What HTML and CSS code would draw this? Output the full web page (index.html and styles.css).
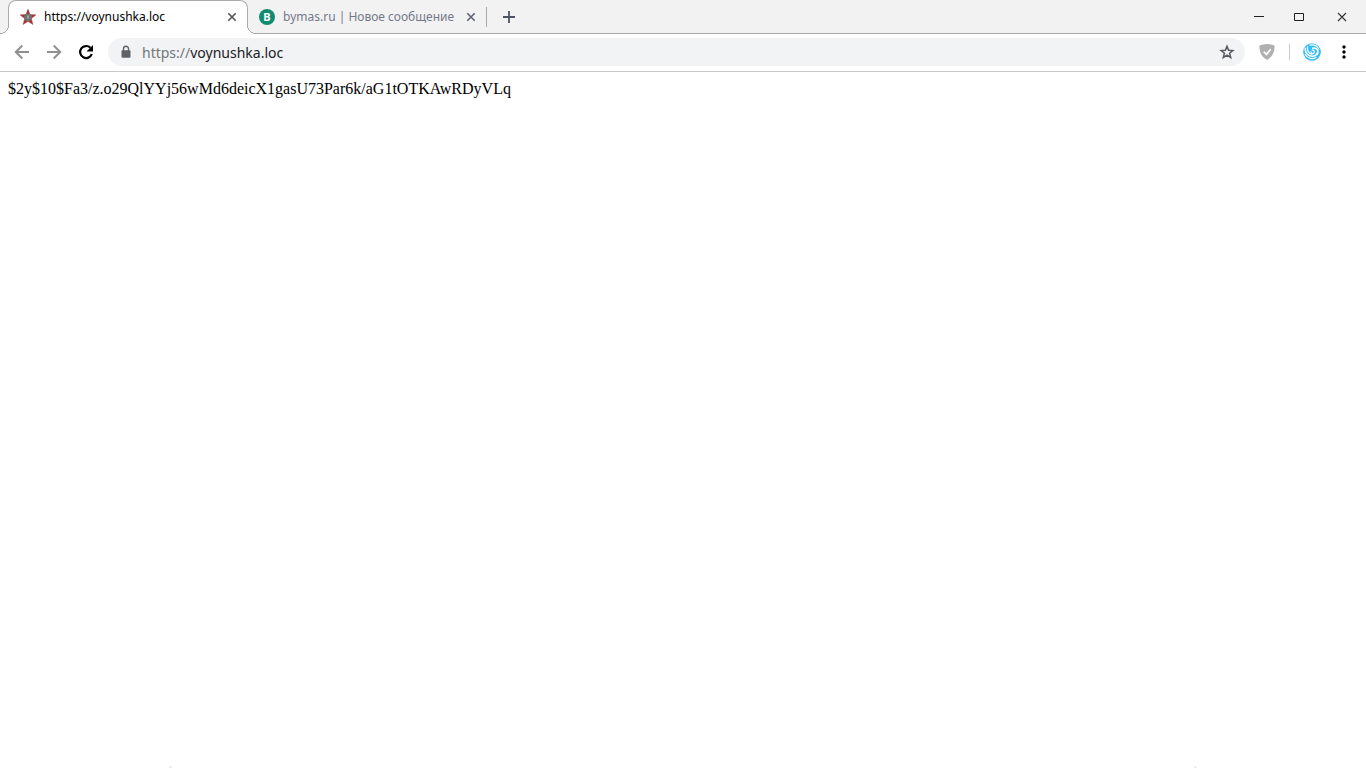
FILE: index.html
```html
<!DOCTYPE html>
<html lang="ru">
<head>
<meta charset="utf-8">
<title>https://voynushka.loc</title>
<link rel="stylesheet" href="styles.css">
</head>
<body>
<header class="browser">
  <div class="tabstrip">
    <div class="tab tab-active">
      <svg class="favicon" viewBox="0 0 16 16" aria-hidden="true">
        <path d="M8 .3 10 5.6 15.8 5.9 11.3 9.6 12.9 15.4 8 12.3 3.1 15.4 4.7 9.6.2 5.9 6 5.6z" fill="#c9201f" stroke="#9a5552" stroke-width=".6"/>
        <path d="M8 1.2V8L5 14M8 8l3 6M8 8 1 6M8 8l7-2" stroke="#93403f" stroke-width=".7" fill="none"/>
        <circle cx="8" cy="8.3" r="3.9" fill="#6f7273"/>
        <path d="M7 6.8 8 6.200l1 .6-.2 3H7.200z" fill="#a5a5a5"/>
      </svg>
      <a class="tab-title" href="#">https://voynushka.loc</a>
      <button class="tab-close" aria-label="Закрыть вкладку"><svg viewBox="0 0 16 16"><path d="m4.300 4.300 7.400 7.400m0-7.400-7.400 7.400" stroke="#555" stroke-width="1.600"/></svg></button>
    </div>
    <div class="tab">
      <span class="favicon letter-icon">B</span>
      <a class="tab-title" href="#">bymas.ru | Новое сообщение</a>
      <button class="tab-close" aria-label="Закрыть вкладку"><svg viewBox="0 0 16 16"><path d="m4.300 4.300 7.400 7.400m0-7.400-7.400 7.400" stroke="#5f6374" stroke-width="1.600"/></svg></button>
    </div>
    <button class="new-tab" aria-label="Новая вкладка"><svg viewBox="0 0 16 16"><path d="M8 2v12M2 8h12" stroke="#4d5366" stroke-width="1.800"/></svg></button>
    <div class="window-controls">
      <button aria-label="Свернуть"><svg viewBox="0 0 16 16"><path d="M3 8.500h10" stroke="#222"/></svg></button>
      <button aria-label="Развернуть"><svg viewBox="0 0 16 16"><path d="M3.500 5.500h9v7h-9z" stroke="#222" fill="none"/></svg></button>
      <button aria-label="Закрыть"><svg viewBox="0 0 16 16"><path d="m4 5 8 8m0-8-8 8" stroke="#333" stroke-width="1.100"/></svg></button>
    </div>
  </div>
  <div class="toolbar">
    <nav class="navigation">
      <button aria-label="Назад"><svg viewBox="0 0 16 16"><path d="M15 8H2M8.300 1.500 1.800 8l6.500 6.500" stroke="#919191" stroke-width="2" fill="none"/></svg></button>
      <button aria-label="Вперёд"><svg viewBox="0 0 16 16"><path d="M1 8h13M7.700 1.500 14.200 8l-6.500 6.500" stroke="#919191" stroke-width="2" fill="none"/></svg></button>
      <button aria-label="Обновить"><svg viewBox="0 0 16 16"><path d="M13.800 10A6 6 0 1 1 12.400 3.800" stroke="#000" stroke-width="2.200" fill="none"/><path d="M15 1v6.500H8.500z"/></svg></button>
    </nav>
    <form class="omnibox">
      <svg class="lock" viewBox="0 0 16 16" aria-hidden="true"><path d="M5.500 7V4.800a2.500 2.500 0 0 1 5 0V7" stroke="#5f6368" stroke-width="1.400" fill="none"/><rect x="3.500" y="6.200" width="9" height="7.500" rx="1" fill="#5f6368"/></svg>
      <label class="scheme" for="address">https://</label>
      <input id="address" class="address" type="text" value="voynushka.loc" spellcheck="false">
      <button class="bookmark" type="button" aria-label="Добавить в закладки"><svg viewBox="0 0 16 16"><path d="m8 2.200 1.600 4 4.300.3-3.300 2.800 1.100 4.300L8 11.200l-3.700 2.400 1.100-4.300-3.300-2.800 4.300-.3z" stroke="#55595f" stroke-width="1.500" fill="none"/></svg></button>
    </form>
    <button class="shield" aria-label="Блокировщик рекламы"><svg viewBox="0 0 16 16"><path d="M8 0C5.500 0 3 .5.4 1.500.4 7 1.500 12.200 8 16c6.500-3.800 7.600-9 7.600-14.500C13 .5 10.500 0 8 0z" fill="#b0b0b0"/><path d="m4.700 7.700 2.700 2.700 4.300-5.200" stroke="#fff" stroke-width="1.700" fill="none"/></svg></button>
    <span class="divider"></span>
    <button class="profile" aria-label="Профиль"><svg viewBox="0 0 18 18"><circle cx="9" cy="9" r="8.800" fill="#2fbcf8"/><g fill="none" stroke="#fff" stroke-linecap="round"><path d="M7 2.200C10.500 1.300 14 3 15.800 6" stroke-width="1.300"/><path d="M9.500 5.200C13.500 4.300 16.200 7.500 14.300 11.500" stroke-width="1.500"/><path d="M2.200 5.500C2 9.500 4.800 13 9 13.200 12 13.300 13.800 11.500 14.300 9.800" stroke-width="1.500"/><path d="M4.500 3.800C4 7.500 5.500 10.800 9 11" stroke-width="1.300"/><path d="M2.200 11.500C4.500 15.500 9.500 16.800 13 14.500" stroke-width="1.300"/><path d="M8 8.800A1.700 1.700 0 1 0 9.200 7.200" stroke-width="1.200"/></g></svg></button>
    <button class="menu" aria-label="Меню"><svg viewBox="0 0 16 16"><circle cx="8" cy="3" r="1.700"/><circle cx="8" cy="8" r="1.700"/><circle cx="8" cy="13" r="1.700"/></svg></button>
  </div>
</header>
<main class="page">$2y$10$Fa3/z.o29QlYYj56wMd6deicX1gasU73Par6k/aG1tOTKAwRDyVLq</main>
<footer class="edge-marks"><span></span><span></span></footer>
</body>
</html>
```

FILE: styles.css
```css
* { box-sizing: border-box; }

body {
  display: flex;
  flex-direction: column;
  min-height: 100vh;
  margin: 0;
  background: #fff;
  color: #000;
}

button {
  display: flex;
  flex: none;
  align-items: center;
  justify-content: center;
  padding: 0;
  border: 0;
  background: none;
}

svg {
  display: block;
  flex: none;
  width: 16px;
  height: 16px;
}

.browser { font-family: "Noto Sans", sans-serif; }

.tabstrip {
  display: flex;
  align-items: flex-start;
  height: 34px;
  padding-left: 8px;
  background: #f2f2f2;
  box-shadow: inset 0 -1px #ababab;
}

.tab {
  position: relative;
  display: flex;
  align-items: center;
  width: 239px;
  height: 34px;
  padding: 0 8px 0 11px;
}

.tab::after {
  content: "";
  position: absolute;
  top: 7px;
  right: 0;
  width: 1px;
  height: 20px;
  background: #a5a9b0;
}

.tab-active {
  width: 240px;
  padding: 0 7px 1px 11px;
  border: 1px solid #ababab;
  border-bottom: 0;
  border-radius: 8px 8px 0 0;
  background: #fff;
}

.tab-active::before,
.tab-active::after {
  content: "";
  position: absolute;
  top: auto;
  bottom: 0;
  width: 9px;
  height: 9px;
}

.tab-active::before {
  left: -9px;
  background: radial-gradient(circle at 0 0, #f2f2f2 8px, #ababab 8px, #ababab 9px, #fff 9px);
}

.tab-active::after {
  right: -9px;
  background: radial-gradient(circle at 100% 0, #f2f2f2 8px, #ababab 8px, #ababab 9px, #fff 9px);
}

.favicon {
  flex: none;
  width: 16px;
  height: 16px;
}

.letter-icon {
  border-radius: 50%;
  background: #128c70;
  color: #fff;
  font: bold 11px/16px "Noto Sans", sans-serif;
  text-align: center;
}

.tab-title {
  flex: 1;
  margin-left: 8px;
  overflow: hidden;
  color: #74798a;
  font-size: 12px;
  line-height: 16px;
  text-decoration: none;
  white-space: nowrap;
}

.tab-active .tab-title { color: #000; }

.new-tab {
  width: 28px;
  height: 34px;
  margin-left: 8px;
}

.window-controls {
  display: flex;
  gap: 24px;
  margin-left: auto;
  padding-right: 16px;
}

.window-controls button {
  width: 16px;
  height: 32px;
}

.window-controls button:last-child { margin-left: 3px; }

.toolbar {
  display: flex;
  align-items: center;
  height: 38px;
  padding: 0 14px 1px 0;
  border-bottom: 1px solid #c9c9c9;
}

.navigation {
  display: flex;
  gap: 16px;
  padding: 0 14px;
}

.omnibox {
  display: flex;
  flex: 1;
  align-items: center;
  height: 28px;
  padding: 0 10px;
  border-radius: 14px;
  background: #f1f3f4;
  font-size: 14px;
}

.scheme {
  margin-left: 8px;
  color: #72777c;
}

.address {
  flex: 1;
  min-width: 0;
  padding: 0;
  border: 0;
  outline: 0;
  background: none;
  color: #202124;
  font: inherit;
}

.shield { margin-left: 14px; }

.divider {
  width: 1px;
  height: 16px;
  margin: 0 13px 0 14px;
  background: #ccc;
}

.profile svg {
  width: 18px;
  height: 18px;
}

.menu {
  width: 16px;
  margin-left: 15px;
}

.page {
  flex: 1;
  padding: 8px;
  font: 16px/18px "Liberation Serif", serif;
  overflow-wrap: anywhere;
}

.edge-marks {
  display: flex;
  justify-content: space-between;
  padding: 0 169px;
}

.edge-marks span {
  width: 3px;
  height: 2px;
  background: #eee;
}
```
